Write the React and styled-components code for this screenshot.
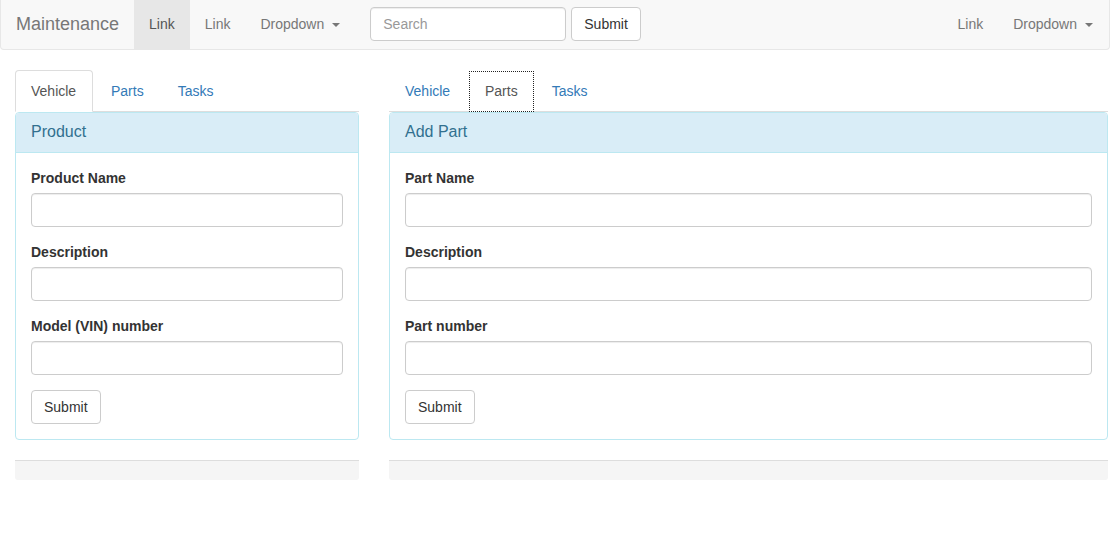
import React from "react";
import styled, { createGlobalStyle } from "styled-components";

const GlobalStyle = createGlobalStyle`
  * { box-sizing: border-box; }
  body {
    margin: 0;
    font-family: "Liberation Sans", Arial, Helvetica, sans-serif;
    font-size: 14px;
    line-height: 1.42857143;
    color: #333;
    background: #fff;
  }
`;

const Navbar = styled.nav`
  display: flex;
  align-items: flex-start;
  height: 50px;
  background: #f8f8f8;
  border: 1px solid #e7e7e7;
  border-top: none;
  border-radius: 0 0 4px 4px;
  margin-bottom: 20px;
  padding-right: 1px;
`;

const Brand = styled.a`
  font-size: 18px;
  line-height: 20px;
  padding: 14px 15px 15px;
  height: 49px;
  color: #777;
`;

const NavList = styled.ul`
  display: flex;
  list-style: none;
  margin: 0;
  padding: 0;
  margin-left: ${(p) => (p.$right ? "auto" : "0")};
`;

const NavLink = styled.a`
  display: block;
  height: 49px;
  padding: 14px 15px 15px;
  line-height: 20px;
  color: ${(p) => (p.$active ? "#555" : "#777")};
  background: ${(p) => (p.$active ? "#e7e7e7" : "transparent")};
  cursor: pointer;
`;

const Caret = styled.span`
  display: inline-block;
  width: 0;
  height: 0;
  margin-left: 8px;
  vertical-align: middle;
  border-top: 4px solid;
  border-right: 4px solid transparent;
  border-left: 4px solid transparent;
`;

const SearchForm = styled.form`
  display: flex;
  gap: 5px;
  margin: 7px 0 0;
  padding: 0 15px;
`;

const Input = styled.input`
  display: block;
  width: ${(p) => p.$width || "100%"};
  height: 34px;
  padding: 6px 12px;
  font-family: inherit;
  font-size: 14px;
  color: #555;
  background: #fff;
  border: 1px solid #ccc;
  border-radius: 4px;
  box-shadow: inset 0 1px 1px rgba(0, 0, 0, 0.075);
  &::placeholder { color: #999; }
`;

const Button = styled.button`
  display: inline-block;
  height: 34px;
  padding: 6px 12px;
  font-family: inherit;
  font-size: 14px;
  line-height: 20px;
  color: #333;
  background: #fff;
  border: 1px solid #ccc;
  border-radius: 4px;
  cursor: pointer;
`;

const Content = styled.div`
  display: grid;
  grid-template-columns: 344px 1fr;
  column-gap: 30px;
  padding: 0 2px 0 15px;
`;

const Column = styled.div`
  display: flex;
  flex-direction: column;
`;

const Tabs = styled.ul`
  display: flex;
  list-style: none;
  margin: 0;
  padding: 0;
  border-bottom: 1px solid #ddd;
`;

const Tab = styled.li`
  margin-right: 2px;
  margin-bottom: -1px;
`;

const TabLink = styled.a`
  display: block;
  padding: 10px 15px 10px 15px;
  min-width: ${(p) => p.$min || "auto"};
  line-height: 20px;
  border-radius: 4px 4px 0 0;
  cursor: pointer;
  color: ${(p) => (p.$active ? "#555" : "#337ab7")};
  background: ${(p) => (p.$active ? "#fff" : "transparent")};
  border: 1px ${(p) => (p.$focus ? "dotted #222" : "solid")};
  border-color: ${(p) =>
    p.$focus ? "#222" : p.$active ? "#ddd #ddd transparent" : "transparent"};
  ${(p) => (p.$focus ? "border-radius: 0; margin-top: 1px; padding-top: 9px;" : "")}
`;

const Panel = styled.div`
  border: 1px solid #bce8f1;
  border-radius: 4px;
  background: #fff;
  margin-bottom: 20px;
`;

const PanelHeading = styled.div`
  padding: 10px 15px;
  background: #d9edf7;
  color: #31708f;
  border-bottom: 1px solid #bce8f1;
  border-radius: 3px 3px 0 0;
  font-size: 16px;
  line-height: 17.6px;
  height: 39.6px;
`;

const PanelBody = styled.div`
  padding: 15px;
`;

const FormGroup = styled.div`
  margin-bottom: 15px;
`;

const Label = styled.label`
  display: block;
  font-weight: bold;
  margin-bottom: 5px;
`;

const FooterBar = styled.div`
  height: 20px;
  background: #f5f5f5;
  border-top: 1px solid #ddd;
  border-radius: 0 0 3px 3px;
`;

function FormPanel({ title, fields, tabs, active, focus }) {
  return (
    <Column>
      <Tabs>
        {tabs.map((t) => (
          <Tab key={t}>
            <TabLink $active={t === active} $focus={t === focus} $min={t === "Vehicle" ? "78px" : t === "Parts" ? "63px" : "auto"}>
              {t}
            </TabLink>
          </Tab>
        ))}
      </Tabs>
      <Panel>
        <PanelHeading>{title}</PanelHeading>
        <PanelBody>
          {fields.map((f) => (
            <FormGroup key={f}>
              <Label>{f}</Label>
              <Input type="text" />
            </FormGroup>
          ))}
          <Button type="button">Submit</Button>
        </PanelBody>
      </Panel>
      <FooterBar />
    </Column>
  );
}

export default function App() {
  const tabs = ["Vehicle", "Parts", "Tasks"];
  return (
    <>
      <GlobalStyle />
      <Navbar>
        <Brand>Maintenance</Brand>
        <NavList>
          <li><NavLink $active>Link</NavLink></li>
          <li><NavLink>Link</NavLink></li>
          <li><NavLink>Dropdown<Caret /></NavLink></li>
        </NavList>
        <SearchForm onSubmit={(e) => e.preventDefault()}>
          <Input $width="196px" placeholder="Search" />
          <Button type="submit">Submit</Button>
        </SearchForm>
        <NavList $right>
          <li><NavLink>Link</NavLink></li>
          <li><NavLink>Dropdown<Caret /></NavLink></li>
        </NavList>
      </Navbar>
      <Content>
        <FormPanel
          title="Product"
          tabs={tabs}
          active="Vehicle"
          fields={["Product Name", "Description", "Model (VIN) number"]}
        />
        <FormPanel
          title="Add Part"
          tabs={tabs}
          active="Parts"
          focus="Parts"
          fields={["Part Name", "Description", "Part number"]}
        />
      </Content>
    </>
  );
}
